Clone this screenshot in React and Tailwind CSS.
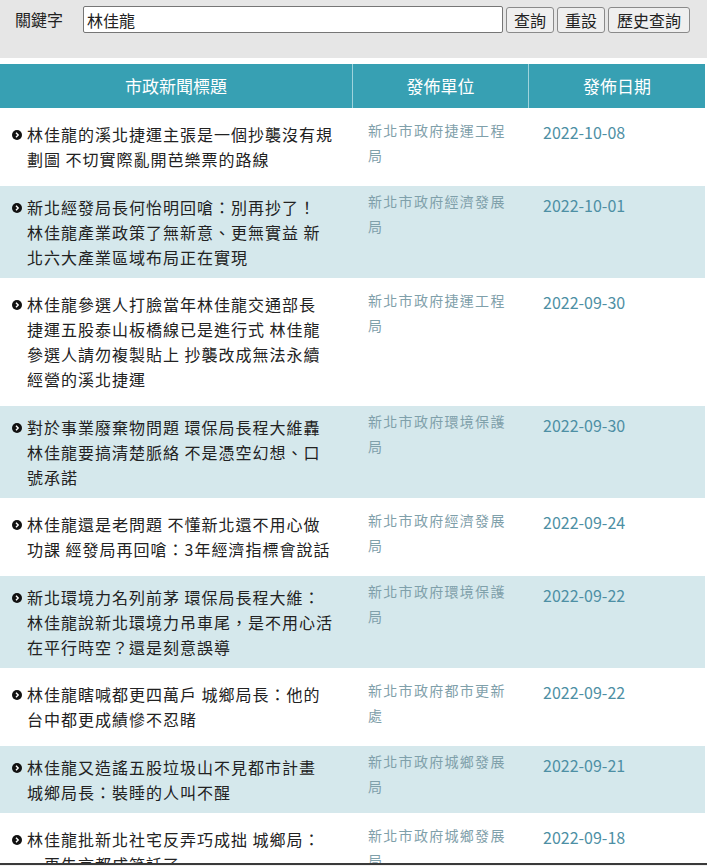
import React from "react";

const rows = [
  {
    title: ["林佳龍的溪北捷運主張是一個抄襲沒有規", "劃圖 不切實際亂開芭樂票的路線"],
    unit: "新北市政府捷運工程局",
    date: "2022-10-08",
  },
  {
    title: ["新北經發局長何怡明回嗆：別再抄了！", "林佳龍產業政策了無新意、更無實益 新", "北六大產業區域布局正在實現"],
    unit: "新北市政府經濟發展局",
    date: "2022-10-01",
  },
  {
    title: ["林佳龍參選人打臉當年林佳龍交通部長", "捷運五股泰山板橋線已是進行式 林佳龍", "參選人請勿複製貼上 抄襲改成無法永續", "經營的溪北捷運"],
    unit: "新北市政府捷運工程局",
    date: "2022-09-30",
  },
  {
    title: ["對於事業廢棄物問題 環保局長程大維轟", "林佳龍要搞清楚脈絡 不是憑空幻想、口", "號承諾"],
    unit: "新北市政府環境保護局",
    date: "2022-09-30",
  },
  {
    title: ["林佳龍還是老問題 不懂新北還不用心做", "功課 經發局再回嗆：3年經濟指標會說話"],
    unit: "新北市政府經濟發展局",
    date: "2022-09-24",
  },
  {
    title: ["新北環境力名列前茅 環保局長程大維：", "林佳龍說新北環境力吊車尾，是不用心活", "在平行時空？還是刻意誤導"],
    unit: "新北市政府環境保護局",
    date: "2022-09-22",
  },
  {
    title: ["林佳龍瞎喊都更四萬戶 城鄉局長：他的", "台中都更成績慘不忍睹"],
    unit: "新北市政府都市更新處",
    date: "2022-09-22",
  },
  {
    title: ["林佳龍又造謠五股垃圾山不見都市計畫", "城鄉局長：裝睡的人叫不醒"],
    unit: "新北市政府城鄉發展局",
    date: "2022-09-21",
  },
  {
    title: ["林佳龍批新北社宅反弄巧成拙 城鄉局：", "一再失言都成笑話了"],
    unit: "新北市政府城鄉發展局",
    date: "2022-09-18",
  },
];

const Bullet = () => (
  <svg width="10" height="10" viewBox="0 0 10 10" className="shrink-0 mt-[8px]">
    <circle cx="5" cy="5" r="5" fill="#111" />
    <path d="M4 2.8 L6.2 5 L4 7.2" stroke="#fff" strokeWidth="1.4" fill="none" />
  </svg>
);

const font = { fontFamily: '"Noto Sans CJK TC", "Noto Sans", sans-serif' };

export default function App() {
  return (
    <div className="w-[707px] bg-white text-[#222]" style={font}>
      {/* search bar */}
      <div className="bg-[#e6e6e6] h-[58px] flex items-start pt-[6px] pl-[15px]">
        <span className="text-[16px] leading-[27px] w-[68px]">關鍵字</span>
        <input
          defaultValue="林佳龍"
          className="w-[420px] h-[27px] border border-[#767676] rounded-[2px] bg-white px-[3px] text-[16px] outline-none"
          style={font}
        />
        <div className="flex gap-[3px] ml-[3px] mt-[1px]">
          <button className="h-[26px] w-[48px] border border-[#8a8a8a] rounded-[3px] bg-[#efefef] text-[16px] leading-none">查詢</button>
          <button className="h-[26px] w-[48px] border border-[#8a8a8a] rounded-[3px] bg-[#efefef] text-[16px] leading-none">重設</button>
          <button className="h-[26px] w-[82px] border border-[#8a8a8a] rounded-[3px] bg-[#efefef] text-[16px] leading-none">歷史查詢</button>
        </div>
      </div>

      {/* table */}
      <div className="mt-[6px] w-[705px]">
        <div className="grid grid-cols-[353px_176px_176px] h-[44px] bg-[#37a0b3] text-white text-[17px]">
          <div className="flex items-center justify-center border-r border-[#9fd3dc]">市政新聞標題</div>
          <div className="flex items-center justify-center border-r border-[#9fd3dc]">發佈單位</div>
          <div className="flex items-center justify-center">發佈日期</div>
        </div>

        {rows.map((r, i) => {
          const alt = i % 2 === 1;
          return (
            <div
              key={i}
              className={
                alt
                  ? "grid grid-cols-[353px_176px_176px] items-start bg-[#d5e8ec] pt-[9px] pb-[8px]"
                  : "grid grid-cols-[353px_176px_176px] items-start bg-white pt-[14px] pb-[14px]"
              }
            >
              <div className="flex gap-[5px] pl-[12px]">
                <Bullet />
                <div className="text-[16px] leading-[25px] tracking-[1px]">
                  {r.title.map((line, j) => (
                    <div key={j} className="whitespace-nowrap">{line}</div>
                  ))}
                </div>
              </div>
              <div
                className={
                  alt
                    ? "pl-[15px] pr-[14px] -mt-[6px] text-[14px] leading-[25px] tracking-[1.3px] text-[#7fa0aa]"
                    : "pl-[15px] pr-[14px] -mt-[4px] text-[14px] leading-[25px] tracking-[1.3px] text-[#7fa0aa]"
                }
              >
                {r.unit}
              </div>
              <div
                className={
                  alt
                    ? "pl-[14px] -mt-[2px] text-[16px] leading-[25px] text-[#4d8fa4]"
                    : "pl-[14px] -mt-[2px] text-[16px] leading-[25px] text-[#4d8fa4]"
                }
              >
                {r.date}
              </div>
            </div>
          );
        })}
      </div>

      <div className="fixed left-0 right-0 bottom-0 h-[3px] border-t-2 border-[#3a3a3a] bg-[#f0f0f0]" />
    </div>
  );
}
